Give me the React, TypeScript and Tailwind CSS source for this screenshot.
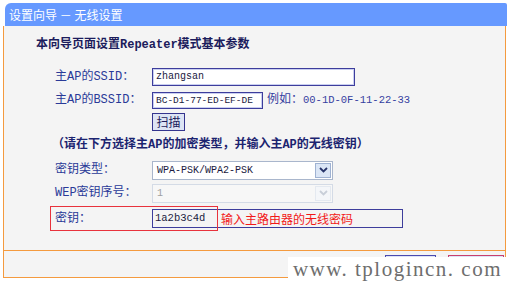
const mono = "font-['Liberation_Mono','Noto_Sans_CJK_SC',monospace]"

function Label({ children }: { children: React.ReactNode }) {
  return <div className={`w-[97px] shrink-0 text-[12px] leading-[14px] text-[#2a3a98] ${mono}`}>{children}</div>
}

function Select({ value, disabled }: { value: string; disabled?: boolean }) {
  return (
    <div
      className={`flex h-[19px] w-[181px] items-stretch border ${
        disabled ? 'border-[#d4dbe6] bg-[#f7f7f7]' : 'border-[#a9b6cc] bg-white'
      }`}
    >
      <div className={`flex-1 pl-[4px] text-[10px] leading-[17px] ${mono} ${disabled ? 'text-[#a0a0a0]' : 'text-[#1a1a40]'}`}>
        {value}
      </div>
      <div
        className={`m-[1px] flex w-[16px] items-center justify-center border ${
          disabled ? 'border-[#e4e9f0] bg-[#f4f6f9]' : 'border-[#9fb2d2] bg-[#dbe6f6]'
        }`}
      >
        <svg width="9" height="6" viewBox="0 0 9 6">
          <path d="M1 1 L4.5 4.5 L8 1" fill="none" stroke={disabled ? '#c8ced8' : '#27346a'} strokeWidth="1.8" />
        </svg>
      </div>
    </div>
  )
}

export default function App() {
  return (
    <div className="relative h-[281px] w-[510px] overflow-hidden bg-white font-['Noto_Sans_CJK_SC',sans-serif]">
      <div className="ml-[3px] w-[503px] pt-[3px]">
        <div className="ml-[2px] flex h-[23px] w-[502px] items-center rounded-tl-[6px] rounded-tr-[2px] bg-[#6699ff] pl-[4px] text-[12px] text-white">
          设置向导 － 无线设置
        </div>

        <div className="h-[225px] border-x border-b border-[#f49a3e] bg-[#f4f4f4] pt-[12px]">
          <div className={`h-[14px] pl-[32px] text-[12px] font-bold leading-[14px] text-[#1c1c5c] ${mono}`}>
            本向导页面设置Repeater模式基本参数
          </div>

          <div className="mt-[14px] flex h-[22px] items-center pl-[51px]">
            <Label>主AP的SSID：</Label>
            <div className={`h-[18px] w-[203px] border border-[#3d3d9c] bg-white pl-[3px] text-[10px] leading-[16px] text-[#1a1a40] shadow-[inset_0_0_0_1px_#c9cff0] ${mono}`}>
              zhangsan
            </div>
          </div>

          <div className="mt-[1px] flex h-[22px] items-center pl-[51px]">
            <Label>主AP的BSSID：</Label>
            <div className={`h-[17px] w-[111px] border border-[#3d3d9c] bg-white pl-[3px] text-[9.5px] leading-[15px] text-[#1a1a40] shadow-[inset_0_0_0_1px_#c9cff0] ${mono}`}>
              BC-D1-77-ED-EF-DE
            </div>
            <div className={`ml-[4px] text-[10.5px] text-[#3440a0] ${mono}`}>
              <span className="text-[12px]">例如：</span>00-1D-0F-11-22-33
            </div>
          </div>

          <div className="flex h-[22px] items-center pl-[148px]">
            <div className="flex h-[18px] w-[33px] items-center justify-center border border-[#34348e] bg-[#dde4f4] text-[12px] text-[#1c1c5c]">
              扫描
            </div>
          </div>

          <div className={`mt-[1px] flex h-[22px] items-center pl-[48px] text-[12px] font-bold text-[#1c2470] ${mono}`}>
            （请在下方选择主AP的加密类型，并输入主AP的无线密钥）
          </div>

          <div className="mt-[3px] flex h-[22px] items-center pl-[51px]">
            <Label>密钥类型：</Label>
            <Select value="WPA-PSK/WPA2-PSK" />
          </div>

          <div className="mt-[1px] flex h-[22px] items-center pl-[51px]">
            <Label>WEP密钥序号：</Label>
            <Select value="1" disabled />
          </div>

          <div className="relative mt-[2px] flex h-[25px] items-center pl-[51px]">
            <Label>密钥：</Label>
            <div className="flex h-[19px] w-[251px] items-center border border-[#3d3d9c]">
              <div className={`w-[68px] pl-[2px] text-[10.5px] text-[#1a1a40] ${mono}`}>1a2b3c4d</div>
              <div className="text-[12px] text-[#f21818]">输入主路由器的无线密码</div>
            </div>
            <div className="absolute left-[46px] top-0 h-[25px] w-[168px] border border-[#e8323c]" />
          </div>
        </div>

        <div className="relative h-[27px] border-x border-b border-[#f49a3e] bg-[#f4f4f4]">
          <div className="absolute left-[381px] top-[4px] h-[18px] w-[51px] border border-[#4a4ab0] bg-[#dde4f4]" />
          <div className="absolute left-[444px] top-[4px] h-[18px] w-[56px] border border-[#c84070] bg-[#dde4f4]" />
        </div>
      </div>

      <div className="absolute bottom-0 right-0 flex h-[24px] w-[222px] items-center justify-end bg-white pr-[8px]">
        <span className="font-['Liberation_Serif',serif] text-[21px] leading-[24px] tracking-[1.5px] text-[#6e6e6e]">
          www. tplogincn. com
        </span>
      </div>
    </div>
  )
}
